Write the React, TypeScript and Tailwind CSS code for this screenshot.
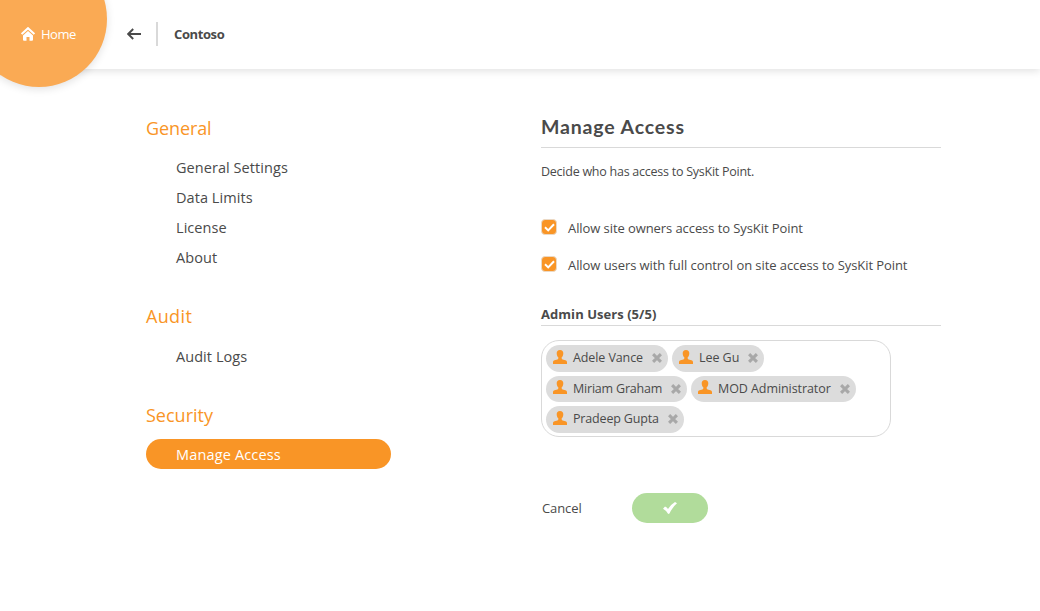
const sections = [
  { title: "General", titleClass: "h-[38px] tracking-[-0.1px]", items: ["General Settings", "Data Limits", "License", "About"], gap: "mb-[30px]" },
  { title: "Audit", titleClass: "h-[39px] tracking-[0.35px]", items: ["Audit Logs"], gap: "mb-[30px]" },
  { title: "Security", titleClass: "h-[37px] tracking-[0px]", items: ["Manage Access"], gap: "" },
];

const userRows = [
  [
    { name: "Adele Vance", width: "w-[122px]", textClass: "tracking-[-0.1px] -mt-px" },
    { name: "Lee Gu", width: "w-[92px]", textClass: "tracking-[-0.05px] -mt-px" },
  ],
  [
    { name: "Miriam Graham", width: "w-[141px]", textClass: "tracking-[-0.2px]" },
    { name: "MOD Administrator", width: "w-[165px]", textClass: "tracking-[-0.07px]" },
  ],
  [{ name: "Pradeep Gupta", width: "w-[138px]", textClass: "tracking-[-0.16px] -mt-px" }],
];

function HomeIcon() {
  return (
    <svg width="14" height="14" viewBox="0 0 14 14" className="shrink-0">
      <path d="M0.6 7.1 7 1.2l6.4 5.9" fill="none" stroke="white" strokeWidth="2.1" />
      <path d="M7 4.1 12 8.6V12.7a1 1 0 0 1-1 1H8.5V10H5.5v3.700H3a1 1 0 0 1-1-1V8.600Z" fill="white" />
    </svg>
  );
}

function BackIcon() {
  return (
    <svg width="14" height="12" viewBox="0 0 14 12" className="-mt-px shrink-0" fill="none" stroke="#4a4a4a" strokeWidth="1.9">
      <path d="M1.3 6H14M6.200 1 1.200 6l5 5" />
    </svg>
  );
}

function UserIcon() {
  return (
    <svg width="14" height="14" viewBox="0 0 14 14" className="-mt-[3px] shrink-0" fill="#f99526">
      <path d="M7 0C9.300 0 10.300 1.300 10.300 3.200c0 1.900-.7 3.300-1.600 4.100v1.200c0 .5.4.8.9.9l2.800.8c1.100.3 1.600 1 1.600 2V14H0v-1.800c0-1 .5-1.700 1.600-2l2.800-.8c.5-.1.9-.4.9-.9V7.300C4.400 6.500 3.700 5.100 3.700 3.200 3.700 1.300 4.700 0 7 0Z" />
    </svg>
  );
}

function RemoveIcon() {
  return (
    <svg width="10" height="10" viewBox="0 0 10 10" className="shrink-0" fill="none" stroke="#a8a8a8" strokeWidth="3">
      <path d="M1.100 1.100 8.900 8.900M8.900 1.100 1.100 8.900" />
    </svg>
  );
}

function CheckOption({ label, textClass }: { label: string; textClass: string }) {
  return (
    <label className="flex h-[37px] items-center">
      <span className="-mt-px flex size-[16px] items-center justify-center rounded-[4px] border border-[#ead9c6] bg-[#f99526]">
        <svg width="11" height="9" viewBox="0 0 11 9" fill="none" stroke="white" strokeWidth="2">
          <path d="M1 4.300 4.200 7.400 10 1.200" />
        </svg>
      </span>
      <span className={`ml-[11px] pt-[2px] text-[13px] whitespace-nowrap ${textClass}`}>{label}</span>
    </label>
  );
}

export default function App() {
  return (
    <div className="relative h-[611px] w-[1040px] overflow-hidden bg-white font-['Open_Sans','Noto_Sans',sans-serif] text-[#4a4a4a]">
      <header className="flex h-[69px] items-center pl-[127px] shadow-[0_2px_8px_rgba(0,0,0,0.12)]">
        <BackIcon />
        <div className="-mt-px ml-[15px] h-6 w-[2px] bg-[#d9d9d9]" />
        <span className="ml-4 text-[13px] font-bold tracking-[-0.4px]">Contoso</span>
      </header>
      <div className="absolute -top-[49px] -left-[29px] size-[136px] rounded-full bg-[#faaa54] pt-[75px] pl-[50px] shadow-[0_2px_8px_rgba(0,0,0,0.12)]">
        <div className="flex h-4 items-center text-white">
          <HomeIcon />
          <span className="ml-[6px] text-[13px] leading-4 tracking-[-0.5px]">Home</span>
        </div>
      </div>

      <div className="flex pl-[146px]">
        <nav className="w-[245px] pt-[46px]">
          {sections.map((section) => (
            <section key={section.title} className={section.gap}>
              <h2 className={`text-[18px] leading-[26px] text-[#f99526] ${section.titleClass}`}>{section.title}</h2>
              {section.items.map((item) => (
                <a
                  key={item}
                  className={
                    item === "Manage Access"
                      ? "block h-[30px] rounded-full bg-[#f99526] pl-[30px] text-[14.500px] leading-[31px] tracking-[0.15px] text-white"
                      : "block h-[30px] pl-[30px] text-[14.500px] leading-[30px] tracking-[0.06px]"
                  }
                >
                  {item}
                </a>
              ))}
            </section>
          ))}
        </nav>

        <main className="ml-[150px] w-[400px] pt-[44px]">
          <h1 className="h-[35px] border-b border-[#d9d9d9] font-['Lato','Open_Sans',sans-serif] text-[19.500px] leading-[27px] font-bold tracking-[0.85px]">
            Manage Access
          </h1>
          <p className="mt-[14px] text-[12.500px] leading-5 tracking-[-0.25px]">Decide who has access to SysKit Point.</p>
          <div className="mt-[27px]">
            <CheckOption label="Allow site owners access to SysKit Point" textClass="tracking-[-0.08px]" />
            <CheckOption label="Allow users with full control on site access to SysKit Point" textClass="tracking-[-0.070px]" />
          </div>
          <h3 className="mt-[22px] h-[21px] border-b border-[#d9d9d9] text-[13px] leading-[18px] font-bold tracking-[0.05px]">
            Admin Users (5/5)
          </h3>
          <div className="mt-[14px] flex h-[97px] w-[350px] flex-col gap-[4px] rounded-[18px] border border-[#d9d9d9] px-1 pt-1">
            {userRows.map((row) => (
              <div key={row[0].name} className="flex gap-1">
                {row.map((user) => (
                  <div key={user.name} className={`flex h-[26.500px] items-center rounded-full bg-[#dcdcdc] pr-[6px] pl-[7px] ${user.width}`}>
                    <UserIcon />
                    <span className={`ml-[6px] flex-1 text-[12.500px] leading-[24px] whitespace-nowrap ${user.textClass}`}>{user.name}</span>
                    <RemoveIcon />
                  </div>
                ))}
              </div>
            ))}
          </div>
          <div className="mt-14 flex h-[30px] items-center">
            <button className="w-[91px] pt-px pl-px text-left text-[13px] tracking-[-0.1px]">Cancel</button>
            <button className="flex h-[30px] w-[76px] items-center justify-center rounded-full bg-[#b1dc9b]">
              <svg width="14" height="12" viewBox="0 0 14 12" fill="white">
                <path d="M0 6.800 2 4.600Q4 5.300 5 6.900 7.800 2.500 12 0L14 1.300Q9.400 5.200 6.500 11.500L5.200 12Q3.500 8.700 0 6.800Z" />
              </svg>
            </button>
          </div>
        </main>
      </div>
    </div>
  );
}
